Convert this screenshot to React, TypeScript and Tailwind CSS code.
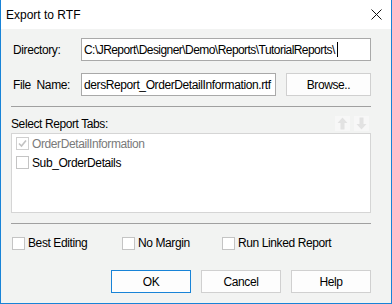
import React from 'react';

const font = { fontFamily: '"Liberation Sans", Arial, sans-serif' };

const Check: React.FC<{ checked?: boolean; disabled?: boolean }> = ({ checked, disabled }) => (
  <span
    className={`flex h-[13px] w-[13px] shrink-0 items-center justify-center border bg-white ${
      disabled ? 'border-[#cfcfcf]' : 'border-[#c4c4c4]'
    }`}
  >
    {checked && (
      <svg width="9" height="9" viewBox="0 0 9 9">
        <path d="M1 4.5 L3.5 7 L8 1.5" fill="none" stroke={disabled ? '#c2c2c2' : '#333'} strokeWidth="1.6" />
      </svg>
    )}
  </span>
);

const Button: React.FC<{ label: string; primary?: boolean; className?: string }> = ({ label, primary, className = '' }) => (
  <button
    className={`flex h-[23px] items-center justify-center border bg-[#fdfdfd] text-[12px] text-black ${
      primary ? 'border-[#1883d7]' : 'border-[#d0d0d0]'
    } ${className}`}
  >
    {label}
  </button>
);

const Arrow: React.FC<{ down?: boolean }> = ({ down }) => (
  <span className="flex h-[15px] w-[15px] items-center justify-center bg-[#f7f7f7]">
    <svg width="11" height="13" viewBox="0 0 11 13" style={{ transform: down ? 'rotate(180deg)' : undefined }}>
      <path d="M5.5 0.5 L10.5 6 L7.5 6 L7.5 12.5 L3.5 12.5 L3.5 6 L0.5 6 Z" fill="#e2e2e2" />
    </svg>
  </span>
);

export default function App() {
  return (
    <div
      className="flex h-[304px] w-[392px] flex-col border-x border-b border-[#1883d7] bg-[#f2f3f2] tracking-[-0.4px]"
      style={font}
    >
      <div className="flex h-[29px] shrink-0 items-center justify-between bg-white pl-[5px] pr-[9px]">
        <span className="text-[12px] tracking-normal text-black">Export to RTF</span>
        <svg width="11" height="11" viewBox="0 0 11 11">
          <path d="M0.5 0.5 L10.5 10.5 M10.5 0.5 L0.5 10.5" stroke="#111" strokeWidth="1" />
        </svg>
      </div>

      <div className="flex w-[370px] flex-col pl-[10px] text-[12px] leading-[18px] text-black">
        <div className="mt-[9px] flex h-[23px] items-center">
          <span className="w-[70px] pl-[2px]">Directory:</span>
          <div className="flex h-[23px] w-[290px] items-center whitespace-nowrap border border-[#a9a9a9] bg-white pl-[2px] tracking-[-0.55px]">
            C:\JReport\Designer\Demo\Reports\TutorialReports\
            <span className="ml-[2px] h-[15px] w-px bg-black" />
          </div>
        </div>

        <div className="mt-[12px] flex h-[23px] items-center">
          <span className="w-[70px] pl-[2px]">File&nbsp; Name:</span>
          <div className="flex h-[23px] w-[195px] items-center overflow-hidden whitespace-nowrap border border-[#a9a9a9] bg-white pl-[2px]">
            dersReport_OrderDetailInformation.rtf
          </div>
          <Button label="Browse.." className="ml-[10px] w-[85px]" />
        </div>

        <div className="mt-[10px] h-px w-[360px] bg-[#a0a0a0]" />

        <div className="mt-[9px] flex h-[15px] w-[360px] items-center justify-between">
          <span>Select Report Tabs:</span>
          <div className="mr-[2px] flex gap-[4px]">
            <Arrow />
            <Arrow down />
          </div>
        </div>

        <div className="mt-[2px] flex h-[80px] w-[360px] flex-col gap-[6px] border border-[#d5d5d5] bg-white pl-[4px] pt-[3px]">
          <div className="flex h-[13px] items-center gap-[3px]">
            <Check checked disabled />
            <span className="text-[#7a7a7a]">OrderDetailInformation</span>
          </div>
          <div className="flex h-[13px] items-center gap-[3px]">
            <Check />
            <span>Sub_OrderDetails</span>
          </div>
        </div>

        <div className="mt-[10px] h-px w-[360px] bg-[#a0a0a0]" />

        <div className="mt-[10px] flex h-[18px] items-center pl-[1px]">
          <div className="flex w-[110px] items-center gap-[3px]">
            <Check />
            <span>Best Editing</span>
          </div>
          <div className="flex w-[100px] items-center gap-[3px]">
            <Check />
            <span>No Margin</span>
          </div>
          <div className="flex items-center gap-[3px]">
            <Check />
            <span>Run Linked Report</span>
          </div>
        </div>

        <div className="mt-[18px] flex w-[360px] justify-end gap-[10px]">
          <Button label="OK" primary className="w-[80px]" />
          <Button label="Cancel" className="w-[80px]" />
          <Button label="Help" className="w-[80px]" />
        </div>
      </div>
    </div>
  );
}
